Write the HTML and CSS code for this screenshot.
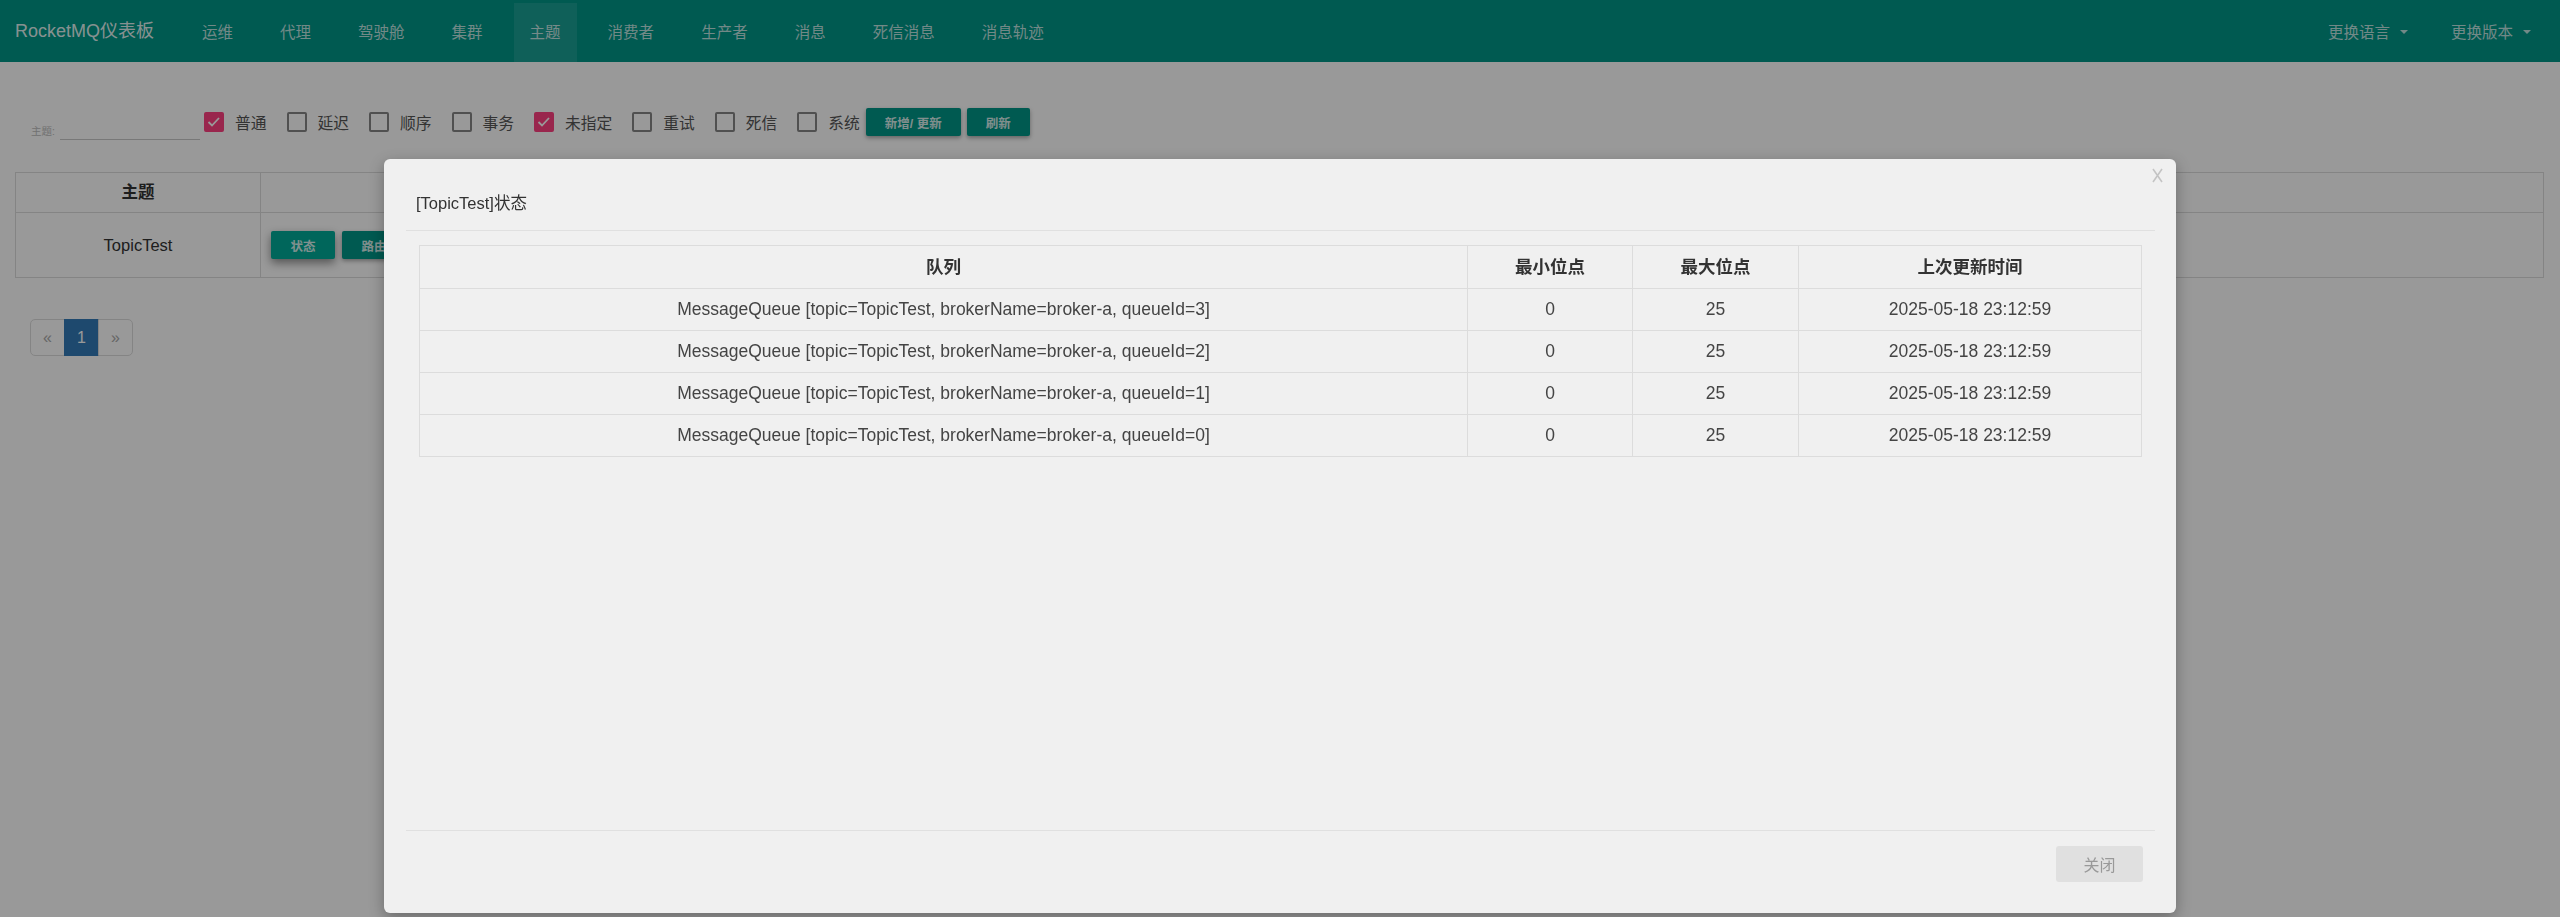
FILE: index.html
```html
<!DOCTYPE html>
<html lang="zh-CN">
<head>
<meta charset="utf-8">
<title>RocketMQ仪表板</title>
<link rel="stylesheet" href="styles.css">
</head>
<body>
<header class="navbar">
  <a class="brand">RocketMQ仪表板</a>
  <ul class="nav">
    <li><a>运维</a></li>
    <li><a>代理</a></li>
    <li><a>驾驶舱</a></li>
    <li><a>集群</a></li>
    <li class="active"><a>主题</a></li>
    <li><a>消费者</a></li>
    <li><a>生产者</a></li>
    <li><a>消息</a></li>
    <li><a>死信消息</a></li>
    <li><a>消息轨迹</a></li>
  </ul>
  <ul class="nav nav-right">
    <li><a>更换语言<span class="caret"></span></a></li>
    <li><a>更换版本<span class="caret"></span></a></li>
  </ul>
</header>

<main class="page">
  <div class="filters">
    <div class="search"><label>主题:</label><span class="input"></span></div>
    <label class="cb checked"><span class="box"><svg viewBox="0 0 20 20" width="20" height="20"><path d="M4.5 10 L8 13.5 L15 6" fill="none" stroke="#fff" stroke-width="1.8"/></svg></span>普通</label>
    <label class="cb"><span class="box"></span>延迟</label>
    <label class="cb"><span class="box"></span>顺序</label>
    <label class="cb"><span class="box"></span>事务</label>
    <label class="cb checked"><span class="box"><svg viewBox="0 0 20 20" width="20" height="20"><path d="M4.5 10 L8 13.5 L15 6" fill="none" stroke="#fff" stroke-width="1.8"/></svg></span>未指定</label>
    <label class="cb"><span class="box"></span>重试</label>
    <label class="cb"><span class="box"></span>死信</label>
    <label class="cb"><span class="box"></span>系统</label>
    <div class="actions">
      <button class="btn">新增/ 更新</button>
      <button class="btn">刷新</button>
    </div>
  </div>

  <table class="topics">
    <colgroup><col class="c-topic"><col></colgroup>
    <thead><tr><th>主题</th><th>操作</th></tr></thead>
    <tbody>
      <tr>
        <td>TopicTest</td>
        <td class="ops">
          <div class="ops-row">
            <button class="btn btn-focus">状态</button>
            <button class="btn">路由</button>
            <button class="btn">Consumer管理</button>
            <button class="btn">Topic配置</button>
            <button class="btn">发送消息</button>
            <button class="btn">重置消费位点</button>
            <button class="btn">跳过消息堆积</button>
            <button class="btn">删除</button>
          </div>
        </td>
      </tr>
    </tbody>
  </table>

  <ul class="pagination">
    <li><a>«</a></li>
    <li class="active"><a>1</a></li>
    <li><a>»</a></li>
  </ul>
</main>

<div class="backdrop"></div>

<div class="modal">
  <div class="modal-header">
    <h4 class="modal-title">[TopicTest]状态</h4>
  </div>
  <span class="modal-close"><svg viewBox="0 0 11 15" width="11" height="15"><path d="M1 1 L10 14 M10 1 L1 14" stroke="#c4c4c4" stroke-width="1.6" fill="none"/></svg></span>
  <div class="modal-body">
    <table class="qtable">
      <colgroup><col><col class="c-min"><col class="c-max"><col class="c-time"></colgroup>
      <thead>
        <tr><th>队列</th><th>最小位点</th><th>最大位点</th><th>上次更新时间</th></tr>
      </thead>
      <tbody>
        <tr><td>MessageQueue [topic=TopicTest, brokerName=broker-a, queueId=3]</td><td>0</td><td>25</td><td>2025-05-18 23:12:59</td></tr>
        <tr><td>MessageQueue [topic=TopicTest, brokerName=broker-a, queueId=2]</td><td>0</td><td>25</td><td>2025-05-18 23:12:59</td></tr>
        <tr><td>MessageQueue [topic=TopicTest, brokerName=broker-a, queueId=1]</td><td>0</td><td>25</td><td>2025-05-18 23:12:59</td></tr>
        <tr><td>MessageQueue [topic=TopicTest, brokerName=broker-a, queueId=0]</td><td>0</td><td>25</td><td>2025-05-18 23:12:59</td></tr>
      </tbody>
    </table>
  </div>
  <div class="modal-footer">
    <button class="btn-close">关闭</button>
  </div>
</div>
</body>
</html>
```

FILE: styles.css
```css
html, body {
  margin: 0;
  padding: 0;
}
body {
  width: 2560px;
  height: 917px;
  overflow: hidden;
  background: #fff;
  color: #333;
  font-family: "Liberation Sans", "Noto Sans CJK SC", sans-serif;
  position: relative;
}

/* ---------- navbar ---------- */
.navbar {
  display: flex;
  height: 62px;
  background: #009688;
}
.brand {
  display: flex;
  align-items: center;
  padding: 0 0 4px 15px;
  margin-right: 32px;
  font-size: 18px;
  color: rgba(255, 255, 255, 0.9);
}
.nav {
  display: flex;
  gap: 15px;
  list-style: none;
  margin: 0;
  padding: 0;
}
.nav li {
  display: flex;
}
.nav a {
  display: flex;
  align-items: center;
  padding: 0 16px;
  font-size: 15.5px;
  color: rgba(255, 255, 255, 0.75);
}
.nav li.active a {
  margin-top: 3px;
  padding-bottom: 3px;
  background: rgba(255, 255, 255, 0.1);
}
.nav-right {
  margin-left: auto;
  margin-right: 13px;
  gap: 11px;
}
.caret {
  display: inline-block;
  width: 0;
  height: 0;
  margin-left: 10px;
  margin-top: 2px;
  border-left: 4px solid transparent;
  border-right: 4px solid transparent;
  border-top: 4px solid currentColor;
}

/* ---------- page ---------- */
.page {
  padding: 0 16px 0 15px;
}
.filters {
  display: flex;
  align-items: center;
  height: 36px;
  margin-top: 42px;
  padding-left: 16px;
}
.search {
  align-self: stretch;
  display: flex;
  align-items: flex-end;
  width: 169px;
  margin-right: 4px;
}
.search label {
  width: 29px;
  flex: none;
  font-size: 10.5px;
  line-height: 14px;
  margin-bottom: 2px;
  color: #bdbdbd;
}
.search .input {
  flex: 1;
  height: 24px;
  border-bottom: 1px solid #c8c8c8;
}
.cb {
  display: flex;
  align-items: center;
  font-size: 15.75px;
  color: #555;
}
.cb + .cb {
  margin-left: 20px;
}
.box {
  width: 20px;
  height: 20px;
  box-sizing: border-box;
  border: 2.5px solid #858585;
  border-radius: 2px;
  margin-right: 11px;
  position: relative;
  overflow: hidden;
}
.box svg {
  display: block;
  margin: -2.5px;
}
.cb.checked .box {
  background: #ff4081;
  border-color: #ff4081;
}
.actions {
  display: flex;
  gap: 6px;
  margin-left: 6px;
}
.btn {
  height: 28px;
  padding: 0 19px;
  border: 0;
  border-radius: 2px;
  background: #009688;
  color: rgba(255, 255, 255, 0.85);
  font-family: inherit;
  font-size: 12.5px;
  font-weight: bold;
  white-space: nowrap;
  box-shadow: 0 2px 4px rgba(0, 0, 0, 0.35);
}

.topics {
  width: 100%;
  margin-top: 32px;
  border-collapse: collapse;
  font-size: 16.5px;
  color: #333;
}
.c-topic {
  width: 245px;
}
.topics th,
.topics td {
  border: 1px solid #ddd;
  text-align: center;
}
.topics th {
  padding: 9px 8px;
  line-height: 21px;
  font-weight: bold;
}
.topics td {
  padding: 18px 10px;
}
.topics td.ops {
  text-align: left;
}
.ops-row {
  display: flex;
  gap: 7px;
}
.ops-row .btn {
  padding: 0 19.5px;
}
.ops-row .btn-focus {
  background: #00aa98;
  box-shadow: 0 4px 10px rgba(0, 0, 0, 0.45);
}

.pagination {
  display: flex;
  list-style: none;
  margin: 41px 0 0 15px;
  padding: 0;
}
.pagination a {
  display: block;
  width: 35px;
  height: 37px;
  box-sizing: border-box;
  margin-left: -1px;
  border: 1px solid #ddd;
  text-align: center;
  line-height: 35px;
  font-size: 16px;
  color: #aaa;
}
.pagination li:first-child a {
  margin-left: 0;
  border-radius: 5px 0 0 5px;
}
.pagination li:last-child a {
  border-radius: 0 5px 5px 0;
}
.pagination li.active a {
  background: #337ab7;
  border-color: #337ab7;
  color: #fff;
}

/* ---------- modal ---------- */
.backdrop {
  position: fixed;
  inset: 0;
  background: rgba(0, 0, 0, 0.4);
}
.modal {
  position: absolute;
  top: 159px;
  left: 384px;
  width: 1792px;
  height: 754px;
  box-sizing: border-box;
  padding: 0 21px 0 22px;
  display: flex;
  flex-direction: column;
  background: #f0f0f0;
  border-radius: 6px;
  box-shadow: 0 5px 15px rgba(0, 0, 0, 0.3);
}
.modal-header {
  height: 72px;
  box-sizing: border-box;
  padding: 34px 10px 0;
  border-bottom: 1px solid #e0e0e0;
}
.modal-title {
  margin: 0;
  font-size: 16.5px;
  line-height: 20px;
  font-weight: normal;
  color: #333;
}
.modal-close {
  position: absolute;
  top: 9px;
  right: 13px;
}
.modal-close svg {
  display: block;
}
.modal-body {
  flex: 1;
  padding: 14px 13px 0;
}
.qtable {
  width: 100%;
  border-collapse: collapse;
  font-size: 17.5px;
  color: #444;
}
.c-min {
  width: 165px;
}
.c-max {
  width: 166px;
}
.c-time {
  width: 343px;
}
.qtable th,
.qtable td {
  border: 1px solid #dcdcdc;
  text-align: center;
  padding: 0 8px;
}
.qtable th {
  height: 43px;
  padding-bottom: 4px;
  box-sizing: border-box;
  font-weight: bold;
  color: #333;
}
.qtable td {
  height: 41px;
}
.modal-footer {
  display: flex;
  justify-content: flex-end;
  padding: 15px 12px 31px;
  border-top: 1px solid #e0e0e0;
}
.btn-close {
  width: 87px;
  height: 36px;
  border: 0;
  border-radius: 3px;
  background: #e0e0e0;
  color: #999;
  font-family: inherit;
  font-size: 16px;
}
```
